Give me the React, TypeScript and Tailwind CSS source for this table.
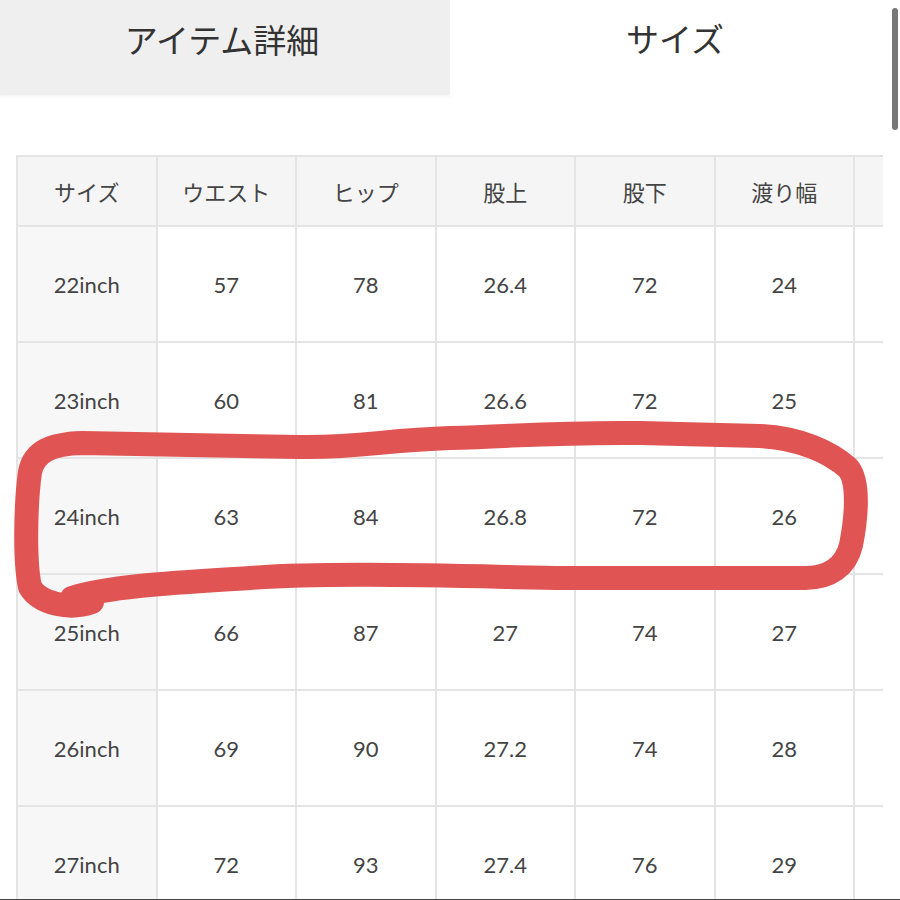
import React from "react";

const HEADERS = ["サイズ", "ウエスト", "ヒップ", "股上", "股下", "渡り幅", ""];

const ROWS = [
  ["22inch", "57", "78", "26.4", "72", "24", ""],
  ["23inch", "60", "81", "26.6", "72", "25", ""],
  ["24inch", "63", "84", "26.8", "72", "26", ""],
  ["25inch", "66", "87", "27", "74", "27", ""],
  ["26inch", "69", "90", "27.2", "74", "28", ""],
  ["27inch", "72", "93", "27.4", "76", "29", ""],
];

const jp = "font-['Noto_Sans_CJK_JP','Noto_Sans',sans-serif]";
const num = "font-['Lato','Noto_Sans_CJK_JP',sans-serif]";

// hand-drawn marker loop around the 24inch row
const Scribble = () => (
  <svg
    className="absolute left-0 top-0 pointer-events-none"
    width={900}
    height={900}
    viewBox="0 0 900 900"
  >
    <path
      d="M 92 602
         C 70 610, 40 604, 30 587
         C 24 560, 26 500, 30 472
         C 34 452, 50 444, 82 443
         L 300 447
         C 360 448, 385 440, 450 438
         C 520 436, 560 432, 640 433
         L 760 436
         C 800 438, 830 452, 848 468
         C 860 482, 856 520, 851 545
         C 846 566, 830 578, 805 578
         L 560 578
         C 450 576, 330 572, 250 578
         C 170 583, 110 586, 72 598"
      fill="none"
      stroke="#e15454"
      strokeWidth={24}
      strokeLinecap="round"
      strokeLinejoin="round"
    />
  </svg>
);

export default function App() {
  return (
    <div className="relative w-[900px] h-[900px] overflow-hidden bg-white text-[#3a3a3a]">
      {/* tabs */}
      <div className="flex h-[95px]">
        <div className={`w-[450px] bg-[#efefef] flex items-start justify-center pt-[15px] pr-[6px] text-[33px] text-[#333] ${jp} shadow-[0_2px_3px_rgba(0,0,0,0.04)]`}>
          アイテム詳細
        </div>
        <div className={`flex-1 flex items-start justify-center pt-[14px] text-[33px] text-[#333] ${jp}`}>
          サイズ
        </div>
      </div>

      {/* size table */}
      <div className="mt-[60px] ml-[16px] w-[867px] overflow-hidden">
        <table className="border-collapse w-[976px] table-fixed">
          <thead>
            <tr className="h-[70px] bg-[#f5f5f5]">
              {HEADERS.map((h, i) => (
                <th
                  key={i}
                  className={`w-[139.5px] border-2 border-[#e4e4e4] font-normal text-[22px] text-[#444] ${jp}`}
                >
                  {h}
                </th>
              ))}
            </tr>
          </thead>
          <tbody>
            {ROWS.map((row, r) => (
              <tr key={r} className="h-[116px]">
                {row.map((c, i) => (
                  <td
                    key={i}
                    className={`border-2 border-[#e4e4e4] text-center text-[22px] text-[#444] ${num} ${i === 0 ? "bg-[#f7f7f7]" : "bg-white"}`}
                  >
                    {c}
                  </td>
                ))}
              </tr>
            ))}
          </tbody>
        </table>
      </div>

      <Scribble />

      {/* scrollbar thumb */}
      <div className="absolute right-[2px] top-[8px] w-[6px] h-[122px] rounded-full bg-[#777]" />
      {/* bottom edge */}
      <div className="absolute left-0 bottom-0 w-full h-[1px] bg-[#444]" />
    </div>
  );
}
